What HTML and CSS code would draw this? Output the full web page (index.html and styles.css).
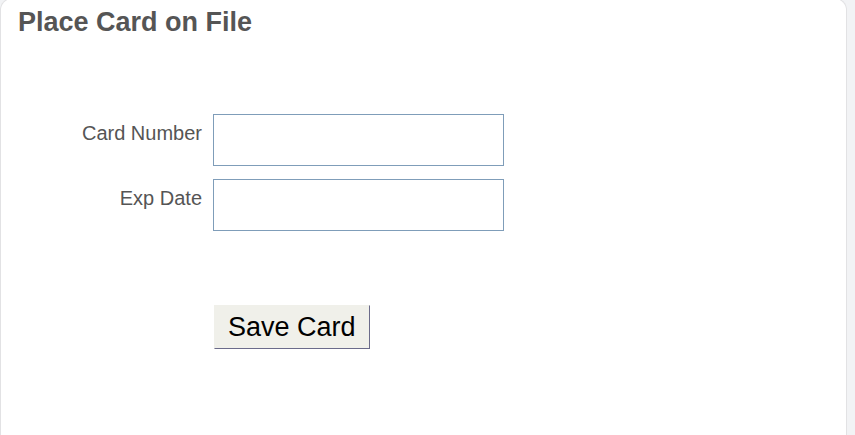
FILE: index.html
```html
<!DOCTYPE html>
<html lang="en">

<head>
  <meta charset="UTF-8">
  <meta name="viewport" content="width=device-width, initial-scale=1.0">
  <title>Place Card on File</title>
  <link rel="stylesheet" href="styles.css">
</head>

<body>
  <div class="panel">
    <h1>Place Card on File</h1>
    <form class="card-form">
      <label class="field-label" for="cardNumber">Card Number</label>
      <input class="field-input" type="text" id="cardNumber">
      <label class="field-label" for="expDate">Exp Date</label>
      <input class="field-input" type="text" id="expDate">
      <div class="actions">
        <button type="button" class="save-button">Save Card</button>
      </div>
    </form>
  </div>
</body>

</html>
```

FILE: styles.css
```css
body {
  margin: 0;
  background-color: #f2f3f5;
  font-family: 'Liberation Sans', Arial, sans-serif;
  overflow: hidden;
}

.panel {
  box-sizing: border-box;
  width: 847px;
  height: 437px;
  margin-top: -2px;
  background-color: #fff;
  border: 1px solid #e2e2e4;
  border-bottom: none;
  border-radius: 12px 12px 0 0;
}

h1 {
  margin: 0;
  padding: 8px 0 0 17px;
  font-size: 27px;
  font-weight: bold;
  color: #555;
}

.card-form {
  display: grid;
  grid-template-columns: 201px 291px;
  column-gap: 11px;
  row-gap: 13px;
  margin-top: 76px;
}

.field-label {
  justify-self: end;
  padding-top: 8px;
  font-size: 20px;
  color: #555;
}

.field-input {
  box-sizing: border-box;
  height: 52px;
  margin: 0;
  border: 1px solid #7f9db9;
  border-radius: 0;
  background: #fff;
}

.actions {
  grid-column: 2;
  padding-top: 61px;
}

.save-button {
  box-sizing: border-box;
  height: 44px;
  margin-left: 1px;
  padding: 0 13px;
  font-family: 'Liberation Sans', Arial, sans-serif;
  font-size: 27px;
  color: #000;
  background-color: #f0f0ea;
  border: 1px solid;
  border-color: #f0f0ea #6b6b8a #6b6b8a #f0f0ea;
  border-radius: 0;
}
```
